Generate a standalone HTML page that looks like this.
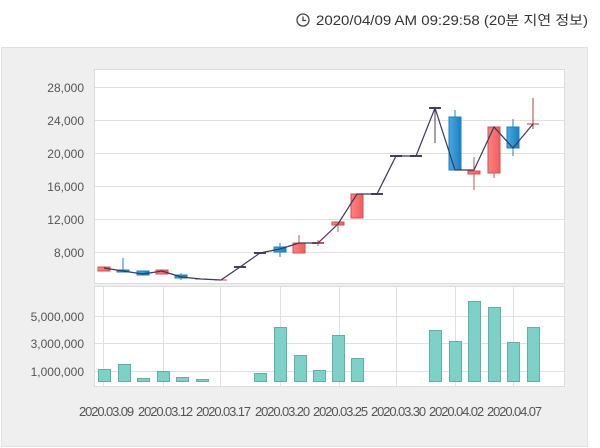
<!DOCTYPE html>
<html><head><meta charset="utf-8"><style>
html,body{margin:0;padding:0;background:#fff;width:600px;height:448px;overflow:hidden}
svg{display:block}
</style></head><body>
<svg width="600" height="448" xmlns="http://www.w3.org/2000/svg" font-family="Liberation Sans, Noto Sans CJK KR, sans-serif">
<defs>
<linearGradient id="bl" x1="0" x2="1"><stop offset="0" stop-color="#4aa8e0"/><stop offset="1" stop-color="#1a80c4"/></linearGradient>
<linearGradient id="rd" x1="0" x2="1"><stop offset="0" stop-color="#ff8080"/><stop offset="1" stop-color="#f06060"/></linearGradient>
</defs>
<circle cx="303" cy="20" r="6" fill="none" stroke="#444" stroke-width="1.3"/>
<path d="M303 16.5V20.5H306" fill="none" stroke="#444" stroke-width="1.3"/>
<text x="316" y="25" font-size="13.5" fill="#333" textLength="272" lengthAdjust="spacingAndGlyphs">2020/04/09 AM 09:29:58 (20분 지연 정보)</text>
<rect x="1.5" y="47.5" width="586" height="399" fill="#efefef" stroke="#e2e2e2"/>
<rect x="94.5" y="69.5" width="470" height="214" fill="#fff" stroke="#dcdcdc"/>
<g stroke="#e0e0e0" stroke-width="1">
<line x1="95" x2="564" y1="87.5" y2="87.5"/><line x1="95" x2="564" y1="120.5" y2="120.5"/>
<line x1="95" x2="564" y1="153.5" y2="153.5"/><line x1="95" x2="564" y1="186.5" y2="186.5"/>
<line x1="95" x2="564" y1="219.5" y2="219.5"/><line x1="95" x2="564" y1="252.5" y2="252.5"/>
</g>
<g font-size="12" fill="#555" text-anchor="end">
<text x="84" y="92">28,000</text><text x="84" y="125">24,000</text><text x="84" y="158">20,000</text>
<text x="84" y="191">16,000</text><text x="84" y="224">12,000</text><text x="84" y="257">8,000</text>
</g>
<g stroke-width="1">
<rect x="98" y="267" width="12" height="4" fill="url(#rd)" stroke="#d05050"/>
<line x1="123" x2="123" y1="258" y2="272" stroke="#1a80c4"/><rect x="117" y="270" width="12" height="2" fill="url(#bl)" stroke="#1a80c4"/>
<rect x="137" y="271" width="12" height="4" fill="url(#bl)" stroke="#1a80c4"/>
<rect x="156" y="270" width="12" height="4" fill="url(#rd)" stroke="#d05050"/>
<line x1="181" x2="181" y1="273" y2="280" stroke="#1a80c4"/><rect x="175" y="275" width="12" height="3" fill="url(#bl)" stroke="#1a80c4"/>
<line x1="195" x2="207" y1="279" y2="279" stroke="#1a80c4"/>
<line x1="215" x2="227" y1="280" y2="280" stroke="#d05050"/>
<line x1="234" x2="246" y1="267" y2="267" stroke="#445" stroke-width="2"/>
<line x1="254" x2="266" y1="253" y2="253" stroke="#445" stroke-width="2"/>
<line x1="280" x2="280" y1="243" y2="257" stroke="#1a80c4"/><rect x="274" y="247" width="12" height="5" fill="url(#bl)" stroke="#1a80c4"/>
<line x1="299" x2="299" y1="235" y2="253" stroke="#d05050"/><rect x="293" y="243" width="12" height="10" fill="url(#rd)" stroke="#d05050"/>
<line x1="318" x2="318" y1="240" y2="246" stroke="#d05050"/><line x1="312" x2="324" y1="243" y2="243" stroke="#d05050" stroke-width="2"/>
<line x1="338" x2="338" y1="222" y2="232" stroke="#d05050"/><rect x="332" y="222" width="12" height="3" fill="url(#rd)" stroke="#d05050"/>
<rect x="351" y="194" width="12" height="24" fill="url(#rd)" stroke="#d05050"/>
<line x1="371" x2="383" y1="194" y2="194" stroke="#445" stroke-width="2"/>
<line x1="390" x2="402" y1="156" y2="156" stroke="#445" stroke-width="2"/>
<line x1="410" x2="422" y1="156" y2="156" stroke="#445" stroke-width="2"/>
<line x1="435" x2="435" y1="108" y2="143" stroke="#445"/><line x1="429" x2="441" y1="108" y2="108" stroke="#445" stroke-width="2"/>
<line x1="455" x2="455" y1="110" y2="117" stroke="#1a80c4"/><rect x="449" y="117" width="12" height="53" fill="url(#bl)" stroke="#1a80c4"/>
<line x1="474" x2="474" y1="157" y2="190" stroke="#d05050"/><rect x="468" y="171" width="12" height="3" fill="url(#rd)" stroke="#d05050"/>
<line x1="494" x2="494" y1="173" y2="178" stroke="#d05050"/><rect x="488" y="127" width="12" height="46" fill="url(#rd)" stroke="#d05050"/>
<line x1="513" x2="513" y1="119" y2="156" stroke="#1a80c4"/><rect x="507" y="127" width="12" height="21" fill="url(#bl)" stroke="#1a80c4"/>
<line x1="533" x2="533" y1="98" y2="129" stroke="#b04040"/><line x1="527" x2="539" y1="124" y2="124" stroke="#b04040"/>
</g>
<polyline fill="none" stroke="#3a3a5a" stroke-width="1.2" points="104,268 123,271 143,274 162,271 181,277 201,279 221,280 240,267 260,253 280,249 299,243 318,243 338,224 357,194 377,194 396,156 416,156 435,108 455,170 474,170 494,127 513,148 533,124"/>
<rect x="94.5" y="286.5" width="470" height="100" fill="#fff" stroke="#dcdcdc"/>
<g stroke="#e0e0e0">
<line x1="95" x2="564" y1="316.5" y2="316.5"/><line x1="95" x2="564" y1="343.5" y2="343.5"/><line x1="95" x2="564" y1="371.5" y2="371.5"/>
<line x1="103.5" x2="103.5" y1="287" y2="386"/><line x1="163.5" x2="163.5" y1="287" y2="386"/>
<line x1="220.5" x2="220.5" y1="287" y2="386"/><line x1="280.5" x2="280.5" y1="287" y2="386"/>
<line x1="339.5" x2="339.5" y1="287" y2="386"/><line x1="396.5" x2="396.5" y1="287" y2="386"/>
<line x1="455.5" x2="455.5" y1="287" y2="386"/><line x1="513.5" x2="513.5" y1="287" y2="386"/>
</g>
<g font-size="12" fill="#555" text-anchor="end">
<text x="84" y="321">5,000,000</text><text x="84" y="348">3,000,000</text><text x="84" y="376">1,000,000</text>
</g>
<g fill="#7fd0c6" stroke="#5fb0a6">
<rect x="98.5" y="369.5" width="12" height="12"/>
<rect x="118.5" y="364.5" width="12" height="17"/>
<rect x="137.5" y="378.5" width="12" height="3"/>
<rect x="157.5" y="371.5" width="12" height="10"/>
<rect x="176.5" y="377.5" width="12" height="4"/>
<rect x="196.5" y="379.5" width="12" height="2"/>
<rect x="254.5" y="373.5" width="12" height="8"/>
<rect x="274.5" y="327.5" width="12" height="54"/>
<rect x="294.5" y="355.5" width="12" height="26"/>
<rect x="313.5" y="370.5" width="12" height="11"/>
<rect x="332.5" y="335.5" width="12" height="46"/>
<rect x="351.5" y="358.5" width="12" height="23"/>
<rect x="429.5" y="330.5" width="12" height="51"/>
<rect x="449.5" y="341.5" width="12" height="40"/>
<rect x="468.5" y="301.5" width="12" height="80"/>
<rect x="488.5" y="307.5" width="12" height="74"/>
<rect x="507.5" y="342.5" width="12" height="39"/>
<rect x="527.5" y="327.5" width="12" height="54"/>
</g>
<g font-size="13" fill="#555" text-anchor="middle" letter-spacing="-1.1">
<text x="106" y="416">2020.03.09</text><text x="165" y="416">2020.03.12</text><text x="223" y="416">2020.03.17</text>
<text x="282" y="416">2020.03.20</text><text x="340" y="416">2020.03.25</text><text x="398" y="416">2020.03.30</text>
<text x="456" y="416">2020.04.02</text><text x="514" y="416">2020.04.07</text>
</g>
</svg>
</body></html>
